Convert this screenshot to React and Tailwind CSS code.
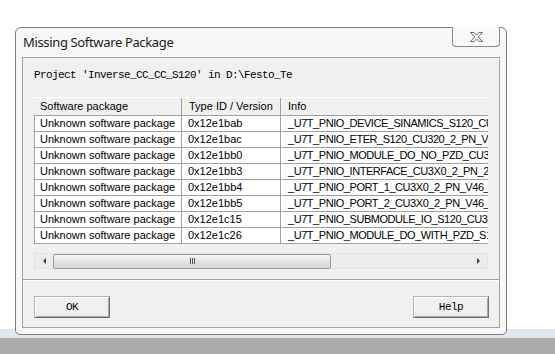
import React from "react";

const rows = [
  ["0x12e1bab", "_U7T_PNIO_DEVICE_SINAMICS_S120_CU320_2_PN_V46"],
  ["0x12e1bac", "_U7T_PNIO_ETER_S120_CU320_2_PN_V46_0"],
  ["0x12e1bb0", "_U7T_PNIO_MODULE_DO_NO_PZD_CU3X0_2_PN"],
  ["0x12e1bb3", "_U7T_PNIO_INTERFACE_CU3X0_2_PN_2_V46"],
  ["0x12e1bb4", "_U7T_PNIO_PORT_1_CU3X0_2_PN_V46_0"],
  ["0x12e1bb5", "_U7T_PNIO_PORT_2_CU3X0_2_PN_V46_0"],
  ["0x12e1c15", "_U7T_PNIO_SUBMODULE_IO_S120_CU320_2_PN"],
  ["0x12e1c26", "_U7T_PNIO_MODULE_DO_WITH_PZD_S120_CU320"],
];

const mono = { fontFamily: '"Liberation Mono", "DejaVu Sans Mono", monospace' };

function CloseIcon() {
  return (
    <svg width="15" height="12" viewBox="0 0 15 12">
      <path
        d="M1.5 1.5h3.5l2.5 2.6 2.5-2.6h3.5l-4.2 4.5 4.2 4.5h-3.5l-2.5-2.6-2.5 2.6h-3.5l4.2-4.5z"
        fill="#fdfdfd"
        stroke="#6b6b6b"
        strokeWidth="1"
        strokeLinejoin="round"
      />
    </svg>
  );
}

function WinButton({ label }) {
  return (
    <button
      className="w-[76px] h-[22px] bg-[#efefef] border border-[#b4b4b4] border-r-[#707070] border-b-[#707070] shadow-[inset_1px_1px_0_#ffffff,inset_-1px_-1px_0_#a8a8a8] text-[11px] tracking-[-0.5px] text-black"
      style={mono}
    >
      {label}
    </button>
  );
}

export default function App() {
  return (
    <div
      className="relative w-[555px] h-[354px] bg-white overflow-hidden"
      style={{ fontFamily: '"Liberation Sans", Arial, sans-serif' }}
    >
      {/* desktop strip behind the dialog */}
      <div className="absolute left-0 right-0 top-[329px] h-[9px] bg-[#dfe7f0]" />
      <div className="absolute left-0 right-0 top-[338px] bottom-0 bg-[#ababab]" />

      <div className="relative ml-[15px] mt-[27px] w-[492px] h-[308px] border border-[#7c7c7c] rounded-t-[6px] rounded-b-[5px] bg-[#f7f7f7] flex flex-col px-[6px] pb-[6px]">
        <div className="h-[29px] flex justify-between items-start">
          <div
            className="pl-[1px] pt-[5px] text-[13px] tracking-[-0.35px] text-[#1b1b1b] leading-[18px]"
            style={{ fontFamily: '"Noto Sans", "Open Sans", sans-serif' }}
          >
            Missing Software Package
          </div>
          <div className="-mt-[1px] w-[48px] h-[20px] border border-[#8a8a8a] border-t-0 rounded-b-[4px] bg-[#f9f9f9] flex items-center justify-center">
            <CloseIcon />
          </div>
        </div>

        <div className="flex-1 border border-[#a3a3a3] bg-[#f0f0f0] flex flex-col">
          <div className="pl-[11px] pr-[10px]">
            <div className="pt-[9px] h-[25px] leading-[16px] text-[11px] tracking-[-0.6px] text-black whitespace-nowrap" style={mono}>
              Project 'Inverse_CC_CC_S120' in D:\Festo_Te
            </div>

            <div className="mt-[14px] w-[454px] overflow-hidden text-[11px] text-black">
              <div className="flex h-[19px] bg-[#f0f0f0] border-t border-white border-b border-b-[#a0a0a0]">
                <div className="w-[148px] shrink-0 pl-[6px] leading-[17px] border-r border-[#a0a0a0]">Software package</div>
                <div className="w-[99px] shrink-0 pl-[7px] leading-[17px] border-r border-[#a0a0a0]">Type ID / Version</div>
                <div className="flex-1 pl-[7px] leading-[17px]">Info</div>
              </div>
              {rows.map(([id, info]) => (
                <div key={id} className="flex h-[16px] bg-white border-b border-[#a0a0a0]">
                  <div className="w-[148px] shrink-0 pl-[5px] leading-[15px] border-l border-r border-[#a0a0a0] whitespace-nowrap">
                    Unknown software package
                  </div>
                  <div className="w-[99px] shrink-0 pl-[6px] leading-[15px] border-r border-[#a0a0a0]">{id}</div>
                  <div className="flex-1 pl-[7px] leading-[15px] tracking-[-0.45px] whitespace-nowrap overflow-hidden">{info}</div>
                </div>
              ))}
            </div>

            {/* horizontal scrollbar */}
            <div className="mt-[9px] w-[454px] h-[16px] bg-[#ececec] border border-[#e3e3e3] flex items-center">
              <div className="w-[18px] h-full flex items-center justify-center">
                <div className="w-0 h-0 border-y-[3px] border-y-transparent border-r-[3px] border-r-[#404040]" />
              </div>
              <div className="w-[278px] h-[15px] rounded-[2px] border border-[#9b9b9b] bg-gradient-to-b from-[#f3f3f3] to-[#d6d6d6] flex items-center justify-center gap-[1px]">
                <div className="w-[1px] h-[6px] bg-[#555]" />
                <div className="w-[1px] h-[6px] bg-[#555]" />
                <div className="w-[1px] h-[6px] bg-[#555]" />
              </div>
              <div className="flex-1" />
              <div className="w-[18px] h-full flex items-center justify-center">
                <div className="w-0 h-0 border-y-[3px] border-y-transparent border-l-[3px] border-l-[#404040]" />
              </div>
            </div>
          </div>

          <div className="mt-[10px] border-t border-[#a0a0a0] border-b border-b-white" />

          <div className="mt-[15px] pl-[11px] pr-[10px] flex justify-between">
            <WinButton label="OK" />
            <WinButton label="Help" />
          </div>
        </div>
      </div>
    </div>
  );
}
